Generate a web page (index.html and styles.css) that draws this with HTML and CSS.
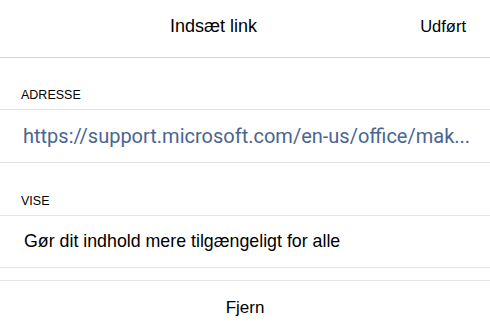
FILE: index.html
```html
<!DOCTYPE html>
<html lang="da">
<head>
<meta charset="utf-8">
<title>Indsæt link</title>
<link rel="stylesheet" href="styles.css">
</head>
<body>
<div class="sheet">
  <header class="topbar">
    <h1 class="title">Indsæt link</h1>
    <button class="done">Udført</button>
  </header>
  <div class="section-label">ADRESSE</div>
  <div class="row url">https://support.microsoft.com/en-us/office/mak...</div>
  <div class="section-label second">VISE</div>
  <div class="row display">Gør dit indhold mere tilgængeligt for alle</div>
  <div class="gap"></div>
  <button class="remove">Fjern</button>
</div>
</body>
</html>
```
FILE: styles.css
```css
* { box-sizing: border-box; }
html, body { margin: 0; padding: 0; background: #fff; }
body { font-family: "Liberation Sans", Arial, sans-serif; color: #000; }
.sheet { width: 490px; height: 327px; display: flex; flex-direction: column; overflow: hidden; }
.topbar {
  height: 58px;
  flex: none;
  display: flex;
  align-items: center;
  border-bottom: 1px solid #d4d4d4;
  padding: 0 24px 4px 170px;
}
.title { margin: 0; font-size: 18px; font-weight: normal; }
.done {
  margin-left: auto; background: none; border: 0; padding: 0;
  font-family: inherit; font-size: 16.5px; color: #000;
}
.section-label {
  height: 52px;
  flex: none;
  display: flex; align-items: flex-end;
  padding: 0 0 7px 21px;
  font-size: 12.5px;
  border-bottom: 1px solid #e3e3e3;
}
.section-label.second { height: 53px; }
.row {
  height: 53px;
  flex: none;
  display: flex; align-items: center;
  border-bottom: 1px solid #e3e3e3;
  white-space: nowrap;
}
.url {
  padding: 0 0 0 23px;
  font-family: Roboto, "Liberation Sans", sans-serif;
  font-size: 20px; color: #4a6591;
}
.display { height: 52px; padding-left: 24px; font-size: 17.8px; }
.gap { height: 13px; flex: none; border-bottom: 1px solid #e3e3e3; }
.remove {
  flex: 1; background: none; border: 0; padding: 8px 0 0 0;
  font-family: inherit; font-size: 17px; color: #000;
}
```
